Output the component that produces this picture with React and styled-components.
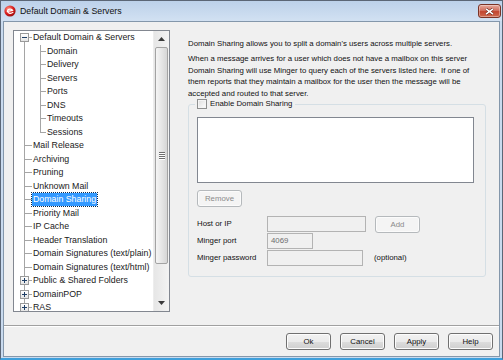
import React from "react";
import styled, { createGlobalStyle } from "styled-components";

const GlobalStyle = createGlobalStyle`
  html, body {
    margin: 0;
    padding: 0;
    background: #ffffff;
  }
  body {
    font-family: "Liberation Sans", Arial, sans-serif;
  }
  * {
    box-sizing: border-box;
  }
`;

const LINE = "#a5a5a5";

const treeRows = [
  { label: "Default Domain & Servers", guides: ["first"], expander: "minus" },
  { label: "Domain", guides: ["pass", "tee"] },
  { label: "Delivery", guides: ["pass", "tee"] },
  { label: "Servers", guides: ["pass", "tee"] },
  { label: "Ports", guides: ["pass", "tee"] },
  { label: "DNS", guides: ["pass", "tee"] },
  { label: "Timeouts", guides: ["pass", "tee"] },
  { label: "Sessions", guides: ["pass", "elbow"] },
  { label: "Mail Release", guides: ["tee"] },
  { label: "Archiving", guides: ["tee"] },
  { label: "Pruning", guides: ["tee"] },
  { label: "Unknown Mail", guides: ["tee"] },
  { label: "Domain Sharing", guides: ["tee"], selected: true },
  { label: "Priority Mail", guides: ["tee"] },
  { label: "IP Cache", guides: ["tee"] },
  { label: "Header Translation", guides: ["tee"] },
  { label: "Domain Signatures (text/plain)", guides: ["tee"] },
  { label: "Domain Signatures (text/html)", guides: ["tee"] },
  { label: "Public & Shared Folders", guides: ["tee"], expander: "plus" },
  { label: "DomainPOP", guides: ["tee"], expander: "plus" },
  { label: "RAS", guides: ["tee"], expander: "plus" },
];

const guideBackground = (kind, x) => {
  const line = `linear-gradient(${LINE}, ${LINE})`;
  const across = `${line} no-repeat right center / calc(100% - ${x}px) 1px`;
  if (kind === "pass") return `${line} no-repeat ${x}px 0 / 1px 100%`;
  if (kind === "tee") return `${line} no-repeat ${x}px 0 / 1px 100%, ${across}`;
  if (kind === "elbow") return `${line} no-repeat ${x}px 0 / 1px 50%, ${across}`;
  return `${line} no-repeat ${x}px 100% / 1px 50%, ${across}`;
};

const Window = styled.div`
  width: 503px;
  height: 360px;
  display: flex;
  flex-direction: column;
  background: #c9daee;
  border: 1px solid #5b6676;
  border-bottom: 2px solid #3e9fdb;
`;

const TitleBar = styled.div`
  height: 20px;
  flex-shrink: 0;
  display: flex;
  align-items: center;
  padding: 0 1px 0 3px;
  background: linear-gradient(#bcd1ea, #d2e1f2);
`;

const AppIcon = styled.svg`
  width: 12px;
  height: 12px;
  flex-shrink: 0;
`;

const Title = styled.span`
  margin-left: 4px;
  flex: 1;
  font-size: 8.8px;
  color: #111111;
`;

const CloseButton = styled.div`
  width: 23px;
  height: 14px;
  display: flex;
  align-items: center;
  justify-content: center;
  border: 1px solid #7a3326;
  border-radius: 3px;
  background: linear-gradient(#e6a99c, #d27262 45%, #c2452f 55%, #cf6a4f);
  box-shadow: inset 0 0 0 1px rgba(255, 255, 255, 0.35);
`;

const Body = styled.div`
  flex: 1;
  margin: 0 2px 1px;
  display: flex;
  flex-direction: column;
  background: #f0f0f0;
  border: 1px solid #8497ab;
`;

const Main = styled.div`
  height: 303px;
  display: flex;
  gap: 18px;
  padding: 8px 0 0 9px;
`;

const Tree = styled.div`
  width: 157px;
  height: 282px;
  display: flex;
  background: #ffffff;
  border: 1px solid #828790;
`;

const TreeList = styled.div`
  flex: 1;
  overflow: hidden;
  padding-left: 2px;
`;

const TreeRow = styled.div`
  height: 13.5px;
  display: flex;
  align-items: stretch;
  white-space: nowrap;
`;

const Guide = styled.div`
  width: ${(p) => p.$w}px;
  flex-shrink: 0;
  display: flex;
  align-items: center;
  justify-content: center;
  background: ${(p) => guideBackground(p.$kind, p.$x)};
`;

const Expander = styled.div`
  width: 9px;
  height: 9px;
  margin-left: 1px;
  border: 1px solid #9a9a9a;
  background: ${(p) =>
    p.$open
      ? "linear-gradient(#1f3f66, #1f3f66) no-repeat center / 5px 1px, linear-gradient(#ffffff, #e4e4e4)"
      : "linear-gradient(#1f3f66, #1f3f66) no-repeat center / 5px 1px, linear-gradient(#1f3f66, #1f3f66) no-repeat center / 1px 5px, linear-gradient(#ffffff, #e4e4e4)"};
`;

const TreeLabel = styled.span`
  align-self: center;
  height: 13px;
  line-height: 13px;
  padding: 0 1px;
  font-size: 8.8px;
  color: ${(p) => (p.$selected ? "#ffffff" : "#1a1a1a")};
  background: ${(p) => (p.$selected ? "#3399ff" : "transparent")};
  outline: ${(p) => (p.$selected ? "1px dotted #0b2a4a" : "none")};
`;

const ScrollBar = styled.div`
  width: 16px;
  display: flex;
  flex-direction: column;
  background: linear-gradient(90deg, #e6e6e6, #f3f3f3);
  border-left: 1px solid #ededed;
`;

const ScrollArrow = styled.div`
  height: 16px;
  display: flex;
  align-items: center;
  justify-content: center;
`;

const ScrollTrack = styled.div`
  flex: 1;
  padding: 0 1px;
`;

const Thumb = styled.div`
  height: 217px;
  display: flex;
  flex-direction: column;
  align-items: center;
  justify-content: center;
  gap: 1px;
  border: 1px solid #a3a3a3;
  border-radius: 2px;
  background: linear-gradient(90deg, #f5f5f5, #e6e6e6 50%, #d6d6d6);
`;

const Grip = styled.div`
  width: 6px;
  height: 1px;
  background: #6f6f6f;
  box-shadow: 0 1px 0 #ffffff;
`;

const Pane = styled.div`
  width: 298px;
  display: flex;
  flex-direction: column;
  padding-top: 8px;
  font-size: 7.8px;
  color: #111111;
`;

const Para = styled.p`
  margin: ${(p) => p.$gap}px 0 0;
  line-height: 11.5px;
  white-space: pre;
`;

const Group = styled.fieldset`
  margin: 0;
  padding: 8px 11px 9px 8px;
  border: 1px solid #d5dfe5;
  border-radius: 3px;
`;

const Legend = styled.legend`
  display: flex;
  align-items: center;
  gap: 3px;
  height: 10px;
  margin-left: -2px;
  padding: 0 3px 0 2px;
  line-height: 10px;
`;

const CheckBox = styled.span`
  width: 10px;
  height: 10px;
  border: 1px solid #8e8f8f;
  background: linear-gradient(135deg, #dcdcdc, #ffffff);
  box-shadow: inset 0 0 0 1px #f4f4f4;
`;

const ListBox = styled.div`
  width: 277px;
  height: 66px;
  background: #ffffff;
  border: 1px solid #828790;
`;

const Button = styled.div`
  width: ${(p) => p.$w}px;
  height: 17px;
  display: flex;
  align-items: center;
  justify-content: center;
  border: 1px solid ${(p) => (p.$disabled ? "#b5b9bc" : "#707070")};
  border-radius: 3px;
  color: ${(p) => (p.$disabled ? "#8a8a8a" : "#111111")};
  background: ${(p) =>
    p.$disabled
      ? "#f4f4f4"
      : "linear-gradient(#f2f2f2, #ebebeb 50%, #dddddd 51%, #cfcfcf)"};
  box-shadow: inset 0 0 0 1px ${(p) => (p.$disabled ? "#fbfbfb" : "#fcfcfc")};
`;

const RemoveRow = styled.div`
  margin-top: 7px;
`;

const Form = styled.div`
  margin-top: 9px;
  display: grid;
  grid-template-columns: 70px auto 1fr;
  grid-auto-rows: 17px;
  align-items: start;
`;

const FieldLabel = styled.span`
  height: 16px;
  line-height: 16px;
`;

const Field = styled.div`
  width: ${(p) => p.$w}px;
  height: 16px;
  padding-left: 3px;
  line-height: 14px;
  color: #6d6d6d;
  background: #f0f0f0;
  border: 1px solid #b3b3b3;
`;

const Trailing = styled.div`
  margin-left: ${(p) => p.$gap}px;
  height: 16px;
  line-height: 16px;
`;

const Footer = styled.div`
  height: 31px;
  display: flex;
  justify-content: flex-end;
  gap: 9px;
  padding: 7px 6px 0 0;
  border-top: 1px solid #a0a0a0;
  box-shadow: inset 0 1px #ffffff;
  font-size: 7.8px;
`;

const Arrow = ({ down }) => (
  <svg width="7" height="4" viewBox="0 0 7 4">
    <path d={down ? "M0 0 H7 L3.5 4 Z" : "M0 4 H7 L3.5 0 Z"} fill="#3a3a3a" />
  </svg>
);

const TreeItem = ({ row }) => (
  <TreeRow>
    {row.guides.map((kind, i) => (
      <Guide key={i} $kind={kind} $w={i === 0 ? 16 : 14} $x={8}>
        {i === row.guides.length - 1 && row.expander && (
          <Expander $open={row.expander === "minus"} />
        )}
      </Guide>
    ))}
    <TreeLabel $selected={row.selected}>{row.label}</TreeLabel>
  </TreeRow>
);

export default function App() {
  return (
    <>
      <GlobalStyle />
      <Window>
        <TitleBar>
          <AppIcon viewBox="0 0 12 12">
            <defs>
              <radialGradient id="ball" cx="0.35" cy="0.3" r="0.8">
                <stop offset="0" stopColor="#ff8a7a" />
                <stop offset="0.55" stopColor="#d91f1f" />
                <stop offset="1" stopColor="#8c0b0b" />
              </radialGradient>
            </defs>
            <circle cx="6" cy="6" r="5.6" fill="url(#ball)" />
            <path
              d="M3.3 6.3 C3.6 3.9 7.6 3.4 8.6 5.3 L3.6 6.4 C4 8.6 7.2 9 8.9 7.4"
              fill="none"
              stroke="#ffffff"
              strokeWidth="1.2"
              strokeLinecap="round"
            />
          </AppIcon>
          <Title>Default Domain &amp; Servers</Title>
          <CloseButton>
            <svg width="9" height="7" viewBox="0 0 9 7">
              <path d="M1 0.8 L8 6.2 M8 0.8 L1 6.2" stroke="#5a1d14" strokeWidth="2.6" />
              <path d="M1 0.8 L8 6.2 M8 0.8 L1 6.2" stroke="#ffffff" strokeWidth="1.6" />
            </svg>
          </CloseButton>
        </TitleBar>
        <Body>
          <Main>
            <Tree>
              <TreeList>
                {treeRows.map((row) => (
                  <TreeItem key={row.label} row={row} />
                ))}
              </TreeList>
              <ScrollBar>
                <ScrollArrow>
                  <Arrow />
                </ScrollArrow>
                <ScrollTrack>
                  <Thumb>
                    <Grip />
                    <Grip />
                    <Grip />
                    <Grip />
                  </Thumb>
                </ScrollTrack>
                <ScrollArrow>
                  <Arrow down />
                </ScrollArrow>
              </ScrollBar>
            </Tree>
            <Pane>
              <Para $gap={0}>
                Domain Sharing allows you to split a domain's users across multiple servers.
              </Para>
              <Para $gap={3.5}>
                {"When a message arrives for a user which does not have a mailbox on this server\n" +
                  "Domain Sharing will use Minger to query each of the servers listed here.  If one of\n" +
                  "them reports that they maintain a mailbox for the user then the message will be\n" +
                  "accepted and routed to that server."}
              </Para>
              <Group>
                <Legend>
                  <CheckBox />
                  Enable Domain Sharing
                </Legend>
                <ListBox />
                <RemoveRow>
                  <Button $w={45} $disabled>
                    Remove
                  </Button>
                </RemoveRow>
                <Form>
                  <FieldLabel>Host or IP</FieldLabel>
                  <Field $w={99} />
                  <Trailing $gap={9}>
                    <Button $w={45} $disabled>
                      Add
                    </Button>
                  </Trailing>
                  <FieldLabel>Minger port</FieldLabel>
                  <Field $w={46}>4069</Field>
                  <span />
                  <FieldLabel>Minger password</FieldLabel>
                  <Field $w={96} />
                  <Trailing $gap={8}>(optional)</Trailing>
                </Form>
              </Group>
            </Pane>
          </Main>
          <Footer>
            <Button $w={45}>Ok</Button>
            <Button $w={45}>Cancel</Button>
            <Button $w={45}>Apply</Button>
            <Button $w={45}>Help</Button>
          </Footer>
        </Body>
      </Window>
    </>
  );
}
